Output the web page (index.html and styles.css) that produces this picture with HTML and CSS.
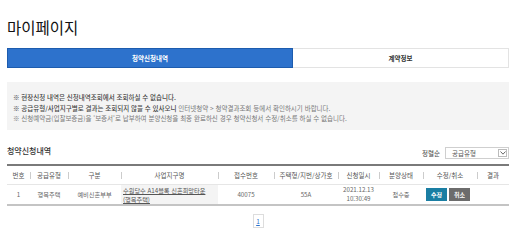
FILE: index.html
```html
<!DOCTYPE html>
<html lang="ko">
<head>
  <meta charset="UTF-8">
  <meta name="viewport" content="width=device-width, initial-scale=1.0">
  <title>마이페이지</title>
  <link rel="stylesheet" href="styles.css">
</head>
<body>
  <div class="page">
    <h1 class="page-title">마이페이지</h1>

    <div class="tabs">
      <a class="tab active" href="#">청약신청내역</a>
      <a class="tab" href="#">계약정보</a>
    </div>

    <div class="notice">
      <p class="strong">※ 현장신청 내역은 신청내역조회에서 조회하실 수 없습니다.</p>
      <p><span class="strong">※ 공급유형/사업지구별로 결과는 조회되지 않을 수 있사오니</span> 인터넷청약 &gt; 청약결과조회 등에서 확인하시기 바랍니다.</p>
      <p>※ 신청예약금(입찰보증금)을 '보증서'로 납부하여 분양신청을 최종 완료하신 경우 청약신청서 수정/취소를 하실 수 없습니다.</p>
    </div>

    <div class="list-head">
      <h2 class="section-title">청약신청내역</h2>
      <div class="sort">
        <span class="sort-label">정렬순</span>
        <div class="select">
          <span>공급유형</span>
          <span class="select-arrow">
            <svg width="6" height="4" viewBox="0 0 6 4"><path d="M0.5 0.5 L3 3.2 L5.5 0.5" fill="none" stroke="#555" stroke-width="0.9"/></svg>
          </span>
        </div>
      </div>
    </div>

    <table class="apply-table">
      <colgroup>
        <col style="width:23px">
        <col style="width:38px">
        <col style="width:53px">
        <col style="width:97px">
        <col style="width:56px">
        <col style="width:64px">
        <col style="width:41px">
        <col style="width:44px">
        <col style="width:54px">
        <col style="width:32px">
      </colgroup>
      <thead>
        <tr>
          <th>번호</th>
          <th>공급유형</th>
          <th>구분</th>
          <th>사업지구명</th>
          <th>접수번호</th>
          <th>주택형/지번/상가호</th>
          <th>신청일시</th>
          <th>분양상태</th>
          <th>수정/취소</th>
          <th>결과</th>
        </tr>
      </thead>
      <tbody>
        <tr>
          <td>1</td>
          <td>행복주택</td>
          <td>예비신혼부부</td>
          <td class="name-cell"><a href="#">수원당수 A14블록 신혼희망타운<br>(행복주택)</a></td>
          <td>40075</td>
          <td>55A</td>
          <td>2021.12.13<br>10:30:49</td>
          <td>접수중</td>
          <td>
            <div class="btns">
              <button class="btn btn-edit">수정</button>
              <button class="btn btn-cancel">취소</button>
            </div>
          </td>
          <td></td>
        </tr>
      </tbody>
    </table>

    <div class="paging">
      <a class="page-num" href="#">1</a>
    </div>
  </div>
</body>
</html>
```

FILE: styles.css
```css
* {
  margin: 0;
  padding: 0;
  box-sizing: border-box;
}

body {
  font-family: "Noto Sans CJK KR", "Noto Sans", sans-serif;
  background: #fff;
  color: #333;
}

.page {
  width: 502px;
  margin: 0 0 0 7px;
}

.page-title {
  font-size: 15.5px;
  font-weight: 400;
  color: #111;
  line-height: 20px;
  padding-top: 17px;
}

.tabs {
  display: flex;
  margin-top: 11px;
}

.tab {
  flex: 0 0 286px;
  height: 20px;
  line-height: 18px;
  text-align: center;
  font-size: 6.5px;
  font-weight: 700;
  color: #333;
  text-decoration: none;
  border: 1px solid #e3e3e3;
  background: #fff;
}

.tab + .tab {
  flex: 1;
  border-left: none;
}

.tab.active {
  background: #2d72cc;
  border-color: #1d5cae;
  color: #fff;
}

.notice {
  margin-top: 14px;
  height: 48px;
  background: #f4f4f4;
  padding: 10px 6px 0;
}

.notice p {
  font-size: 6.5px;
  line-height: 10.5px;
  color: #7a7a7a;
}

.notice .strong {
  color: #444;
  font-weight: 500;
}

.list-head {
  display: flex;
  justify-content: space-between;
  align-items: flex-end;
  margin-top: 13px;
  height: 16px;
}

.section-title {
  font-size: 8px;
  font-weight: 500;
  color: #333;
  line-height: 12px;
  padding-bottom: 2px;
}

.sort {
  display: flex;
  align-items: center;
  gap: 5px;
}

.sort-label {
  font-size: 6.5px;
  color: #444;
}

.select {
  width: 64px;
  height: 12px;
  border: 1px solid #cfcfcf;
  display: flex;
  justify-content: space-between;
  align-items: center;
  padding-left: 6px;
  font-size: 6.5px;
  color: #555;
}

.select-arrow {
  width: 9px;
  height: 8px;
  border: 1px solid #bbb;
  margin-right: 1px;
  display: flex;
  align-items: center;
  justify-content: center;
}

.apply-table {
  width: 502px;
  margin-top: 5px;
  border-collapse: collapse;
  table-layout: fixed;
  border-top: 2px solid #7a7a7a;
  border-bottom: 2px solid #c4c4c4;
}

.apply-table th {
  height: 19px;
  font-size: 6.5px;
  font-weight: 400;
  color: #555;
  text-align: center;
  position: relative;
  white-space: nowrap;
}

.apply-table th + th::before {
  content: '';
  position: absolute;
  left: 0;
  top: 6px;
  width: 1px;
  height: 7px;
  background: #ccc;
}

.apply-table td {
  height: 20px;
  font-size: 6.2px;
  line-height: 9px;
  color: #666;
  text-align: center;
  border-top: 1px solid #e6e6e6;
}

.apply-table td.name-cell {
  text-align: left;
  background: #f4f4f4;
  padding: 1px 0 0 2px;
  vertical-align: top;
}

.name-cell a {
  color: #555;
  text-decoration: underline;
}

.btns {
  display: flex;
  justify-content: center;
  gap: 2px;
  padding-right: 4px;
}

.btn {
  width: 21px;
  height: 13px;
  border: none;
  font-family: inherit;
  font-size: 6px;
  font-weight: 700;
  color: #fff;
  cursor: pointer;
}

.btn-edit {
  background: #1a7ea3;
}

.btn-cancel {
  background: #6c6c6c;
}

.paging {
  display: flex;
  justify-content: center;
  margin-top: 8px;
}

.page-num {
  width: 11px;
  height: 14px;
  border: 1px solid #ddd;
  font-size: 6.5px;
  line-height: 12px;
  text-align: center;
  color: #2d72cc;
  text-decoration: underline;
}
```
